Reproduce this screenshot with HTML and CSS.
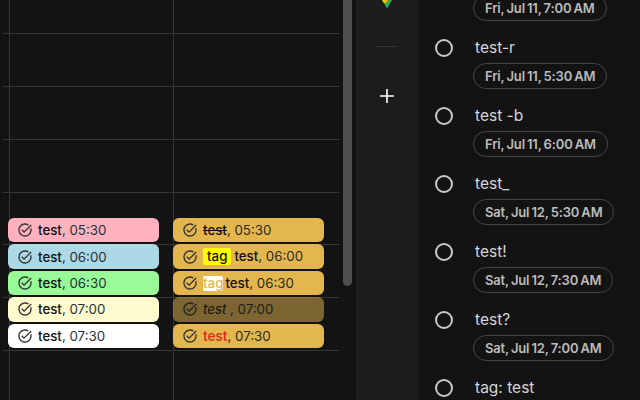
FILE: index.html
```html
<!DOCTYPE html>
<html lang="en">
<head>
<meta charset="utf-8">
<title>Calendar</title>
<link rel="stylesheet" href="styles.css">
</head>
<body>
<svg class="defs" width="0" height="0" aria-hidden="true"><symbol id="task" viewBox="0 0 24 24"><path d="M22 5.18 10.59 16.6l-4.24-4.24 1.41-1.41 2.83 2.83 10-10L22 5.18zM19.79 10.22c.13.57.21 1.17.21 1.78 0 4.42-3.58 8-8 8s-8-3.58-8-8 3.58-8 8-8c1.58 0 3.04.46 4.28 1.25l1.44-1.44C16.1 2.67 14.13 2 12 2 6.48 2 2 6.48 2 12s4.48 10 10 10 10-4.48 10-10c0-1.19-.22-2.33-.6-3.39l-1.61 1.61z"/></symbol></svg>
<div class="app">
  <main class="calendar">
    <div class="hlines"><i></i><i></i><i></i><i></i><i></i><i></i><i></i></div>
    <div class="vline vline-a"></div>
    <div class="vline vline-b"></div>
    <div class="columns">
      <div class="column">
        <div class="event pink"><svg class="check"><use href="#task"/></svg><span><b>test</b>, 05:30</span></div>
        <div class="event blue"><svg class="check"><use href="#task"/></svg><span><b>test</b>, 06:00</span></div>
        <div class="event green"><svg class="check"><use href="#task"/></svg><span><b>test</b>, 06:30</span></div>
        <div class="event cream"><svg class="check"><use href="#task"/></svg><span><b>test</b>, 07:00</span></div>
        <div class="event white"><svg class="check"><use href="#task"/></svg><span><b>test</b>, 07:30</span></div>
      </div>
      <div class="column">
        <div class="event gold"><svg class="check"><use href="#task"/></svg><span><b class="struck">test</b>, 05:30</span></div>
        <div class="event gold"><svg class="check"><use href="#task"/></svg><span><mark class="tag-yellow">tag</mark><b>test</b>, 06:00</span></div>
        <div class="event gold"><svg class="check"><use href="#task"/></svg><span><mark class="tag-white">tag</mark><b>test</b>, 06:30</span></div>
        <div class="event gold faded"><svg class="check"><use href="#task"/></svg><span><em>test</em> , 07:00</span></div>
        <div class="event gold"><svg class="check"><use href="#task"/></svg><span><b class="red">test</b>, 07:30</span></div>
      </div>
    </div>
  </main>
  <div class="scrollbar"><div class="thumb"></div></div>
  <nav class="rail">
    <svg class="gem" width="10" height="9" viewBox="0 0 10 9"><path fill="#34a853" d="M5 8.500 10 0H0z"/><path fill="#fbbc04" d="M0 0h6L3.800 3H1.800z"/></svg>
    <div class="rule"></div>
    <svg class="plus" width="14" height="14" viewBox="0 0 14 14"><path fill="#fff" d="M6.200 0h1.600v6.200H14v1.600H7.800V14H6.200V7.800H0V6.200h6.200z"/></svg>
  </nav>
  <aside class="tasks">
    <div class="task task-cut"><span class="spacer"></span><div class="body"><span class="chip">Fri, Jul 11, 7:00 AM</span></div></div>
    <div class="task"><span class="ring"></span><div class="body"><div class="title">test-r</div><span class="chip">Fri, Jul 11, 5:30 AM</span></div></div>
    <div class="task"><span class="ring"></span><div class="body"><div class="title">test -b</div><span class="chip">Fri, Jul 11, 6:00 AM</span></div></div>
    <div class="task"><span class="ring"></span><div class="body"><div class="title">test_</div><span class="chip">Sat, Jul 12, 5:30 AM</span></div></div>
    <div class="task"><span class="ring"></span><div class="body"><div class="title">test!</div><span class="chip">Sat, Jul 12, 7:30 AM</span></div></div>
    <div class="task"><span class="ring"></span><div class="body"><div class="title">test?</div><span class="chip">Sat, Jul 12, 7:00 AM</span></div></div>
    <div class="task"><span class="ring"></span><div class="body"><div class="title">tag: test</div></div></div>
  </aside>
</div>
</body>
</html>
```
FILE: styles.css
```css
* { box-sizing: border-box; }
html, body { margin: 0; height: 100%; overflow: hidden; background: #131313; }
body { font-family: Inter, "Liberation Sans", sans-serif; }
.defs { position: absolute; }
.app { display: flex; width: 640px; height: 400px; }

.calendar { position: relative; width: 356px; flex: none; padding: 218px 0 0 8px; }
.hlines { position: absolute; left: 3px; top: 33.2px; width: 336px; display: flex; flex-direction: column; gap: 51.8px; }
.hlines i { display: block; height: 1px; background: #363636; }
.vline { position: absolute; top: 0; bottom: 0; width: 1px; background: #363636; }
.vline-a { left: 9px; }
.vline-b { left: 173px; }
.columns { position: relative; display: flex; gap: 14px; }
.column { width: 151px; display: flex; flex-direction: column; gap: 2px; }

.event { height: 24.4px; border-radius: 6px; display: flex; align-items: center; padding-left: 9px; gap: 5px; font-size: 13.3px; color: #27303a; white-space: nowrap; }
.event b { font-weight: 500; color: #111; }
.check { width: 16px; height: 16px; fill: #333; flex: none; }
.pink { background: #ffb2be; }
.blue { background: #add8e6; }
.green { background: #98fb98; }
.cream { background: #fffacd; }
.white { background: #fff; }
.gold { background: #e4b64e; color: #2a2a22; }
.faded { opacity: .5; }
.faded em { font-style: italic; color: #111; }
.struck { text-decoration: line-through; }
.event .red { color: #d93025; font-weight: 600; }
mark { display: inline-block; border-radius: 2px; font-weight: 500; }
.tag-yellow { background: #ff0; color: #111; padding: 0 4px; height: 17px; line-height: 17px; margin-right: 3px; }
.tag-white { background: #fff; color: #e4b64e; margin-right: 2px; height: 15px; line-height: 15px; }

.scrollbar { width: 0; flex: none; position: relative; }
.thumb { position: absolute; left: -13px; top: 0; width: 9px; height: 286px; background: #4f4f4f; border-radius: 0 0 5px 5px; }

.rail { width: 62px; flex: none; background: #1c1c1c; display: flex; flex-direction: column; align-items: center; }
.gem { display: block; }
.rule { width: 22px; height: 1px; background: #333; margin-top: 37px; }
.plus { display: block; margin-top: 42px; }

.tasks { flex: 1; overflow: hidden; padding-left: 17px; color: #d6d6d6; }
.task { height: 68px; display: flex; align-items: flex-start; }
.task-cut { margin-top: -5px; height: 44px; }
.spacer { width: 18px; flex: none; }
.ring { width: 18px; height: 18px; border-radius: 50%; border: 2px solid #c9c9c9; flex: none; }
.body { margin-left: 20px; }
.title { font-size: 15.5px; line-height: 20px; margin: -1px 0 5px 2px; }
.chip { display: inline-block; height: 26px; line-height: 24px; border: 1px solid #444; border-radius: 13px; padding: 0 11px; font-size: 13px; font-weight: 600; letter-spacing: -.15px; color: #bcbcbc; word-spacing: -1px; white-space: nowrap; }
```
